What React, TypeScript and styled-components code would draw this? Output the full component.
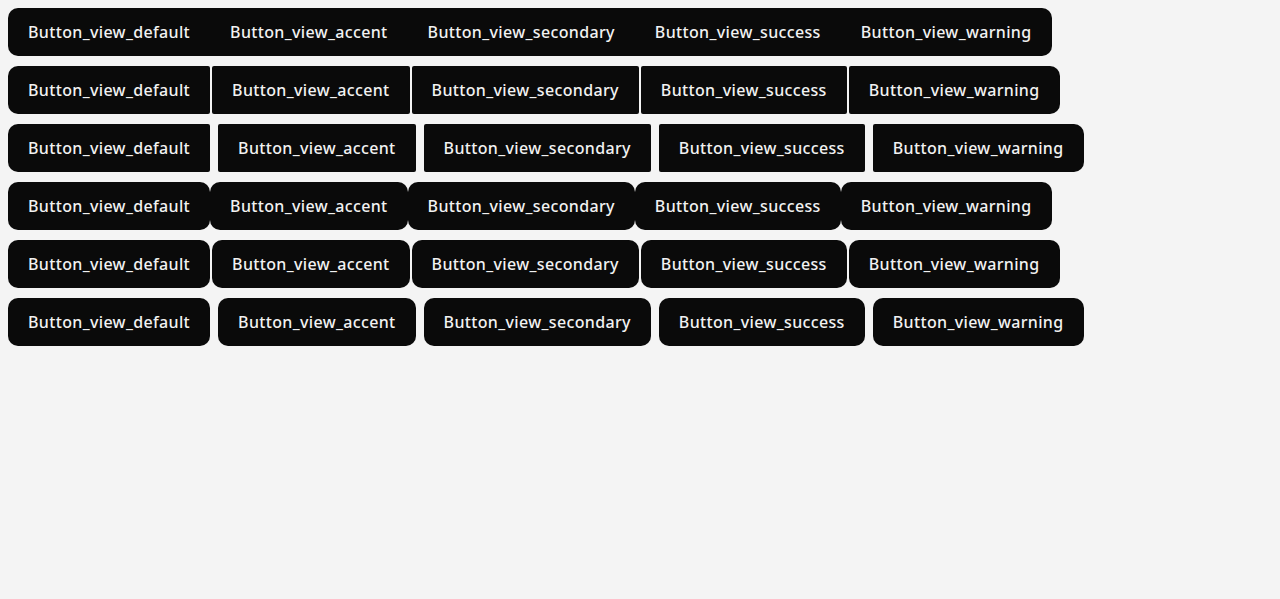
import React from "react";
import styled, { createGlobalStyle, css } from "styled-components";

const GlobalStyle = createGlobalStyle`
  body {
    margin: 0;
    background: #f4f4f4;
    font-family: "Noto Sans", "Liberation Sans", sans-serif;
  }
`;

const Page = styled.div`
  display: flex;
  flex-direction: column;
  align-items: flex-start;
  gap: 10px;
  padding: 8px;
`;

const Group = styled.div<{ $gap: number }>`
  display: flex;
  gap: ${(p) => p.$gap}px;
`;

const Button = styled.button<{ $inner: number }>`
  height: 48px;
  padding: 0 20px;
  border: none;
  background: #0a0a0a;
  color: #f2f2f2;
  font-family: "Noto Sans", "Liberation Sans", sans-serif;
  font-size: 16px;
  font-weight: 500;
  letter-spacing: 0.35px;
  line-height: 1;
  cursor: pointer;
  white-space: nowrap;
  border-radius: ${(p) => p.$inner}px;
  ${(p) =>
    p.$inner < 10 &&
    css`
      &:first-child {
        border-top-left-radius: 10px;
        border-bottom-left-radius: 10px;
      }
      &:last-child {
        border-top-right-radius: 10px;
        border-bottom-right-radius: 10px;
      }
    `}
`;

const views = ["default", "accent", "secondary", "success", "warning"];

const rows = [
  { gap: 0, inner: 0 },
  { gap: 2, inner: 2 },
  { gap: 8, inner: 2 },
  { gap: 0, inner: 10 },
  { gap: 2, inner: 10 },
  { gap: 8, inner: 10 },
];

const App: React.FunctionComponent = () => {
  return (
    <>
      <GlobalStyle />
      <Page>
        {rows.map((row, i) => (
          <Group key={i} $gap={row.gap}>
            {views.map((v) => (
              <Button key={v} $inner={row.inner}>
                Button_view_{v}
              </Button>
            ))}
          </Group>
        ))}
      </Page>
    </>
  );
};

export default App;
